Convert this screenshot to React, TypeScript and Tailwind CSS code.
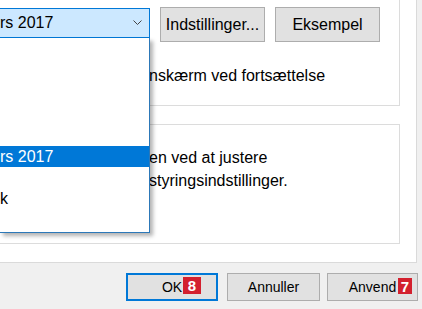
import React from "react";

const items: { text: string; selected?: boolean }[] = [
  { text: "" },
  { text: "" },
  { text: "" },
  { text: "" },
  { text: "" },
  { text: "rs 2017", selected: true },
  { text: "" },
  { text: "k" },
  { text: "" },
];

function Badge({ n, className }: { n: string; className: string }) {
  return (
    <span
      className={
        "absolute flex items-center justify-center bg-[#d3202e] text-white font-bold text-[15px] leading-none " +
        className
      }
    >
      {n}
    </span>
  );
}

export default function App() {
  return (
    <div className="relative w-[422px] h-[309px] overflow-hidden bg-[#f0f0f0] text-black font-['Liberation_Sans',Arial,sans-serif]">
      <div className="flex flex-col w-[417px] h-[263px] bg-white border-r border-b border-[#dadada]">
        {/* group box 1 */}
        <div className="flex flex-col w-[400px] h-[106px] border-r border-b border-[#dcdcdc]">
          <div className="flex items-start pt-[7px]">
            <div className="mt-[1px] flex items-center justify-between w-[150px] h-[30px] bg-[#cce8ff] border-t border-r border-b border-[#0078d7] pr-[7px] text-[16px]">
              <span>rs 2017</span>
              <svg width="9" height="5" viewBox="0 0 9 5" className="mb-[1px]">
                <polyline points="0.5,0.5 4.5,4.5 8.5,0.5" fill="none" stroke="#444" strokeWidth="1" />
              </svg>
            </div>
            <button className="ml-[10px] w-[105px] h-[35px] bg-[#e1e1e1] border border-[#adadad] text-[16px]">
              Indstillinger...
            </button>
            <button className="ml-[10px] w-[105px] h-[35px] bg-[#e1e1e1] border border-[#adadad] text-[16px]">
              Eksempel
            </button>
          </div>
          <div className="mt-[24px] ml-[149px] text-[16px] leading-[20px]">nskærm ved fortsættelse</div>
        </div>
        {/* group box 2 */}
        <div className="mt-[18px] w-[400px] h-[120px] border-t border-r border-b border-[#dcdcdc] pt-[21px] pl-[149px] text-[16px] leading-[23px]">
          <div>en ved at justere</div>
          <div>styringsindstillinger.</div>
        </div>
      </div>

      {/* bottom buttons */}
      <div className="flex mt-[10px] pl-[126px] text-[14px]">
        <button className="relative w-[92px] h-[28px] bg-[#e1e1e1] border-2 border-[#0078d7]">
          OK
          <Badge n="8" className="left-[55px] top-[2px] w-[18px] h-[17px]" />
        </button>
        <button className="ml-[9px] w-[93px] h-[28px] bg-[#e1e1e1] border border-[#adadad]">Annuller</button>
        <button className="relative ml-[7px] w-[91px] h-[28px] bg-[#e1e1e1] border border-[#adadad]">
          Anvend
          <Badge n="7" className="left-[70px] top-[4px] w-[14px] h-[16px]" />
        </button>
      </div>

      {/* open dropdown list */}
      <div className="absolute left-0 top-[38px] flex flex-col w-[150px] h-[195px] pt-[3px] bg-white border-r border-b border-[#2c78b8] shadow-[3px_3px_4px_rgba(0,0,0,0.3)]">
        {items.map((it, i) => (
          <div
            key={i}
            className={
              "h-[21px] leading-[21px] text-[16px] whitespace-nowrap " +
              (it.selected ? "bg-[#0078d7] text-white" : "text-black")
            }
          >
            {it.text}
          </div>
        ))}
      </div>
    </div>
  );
}
